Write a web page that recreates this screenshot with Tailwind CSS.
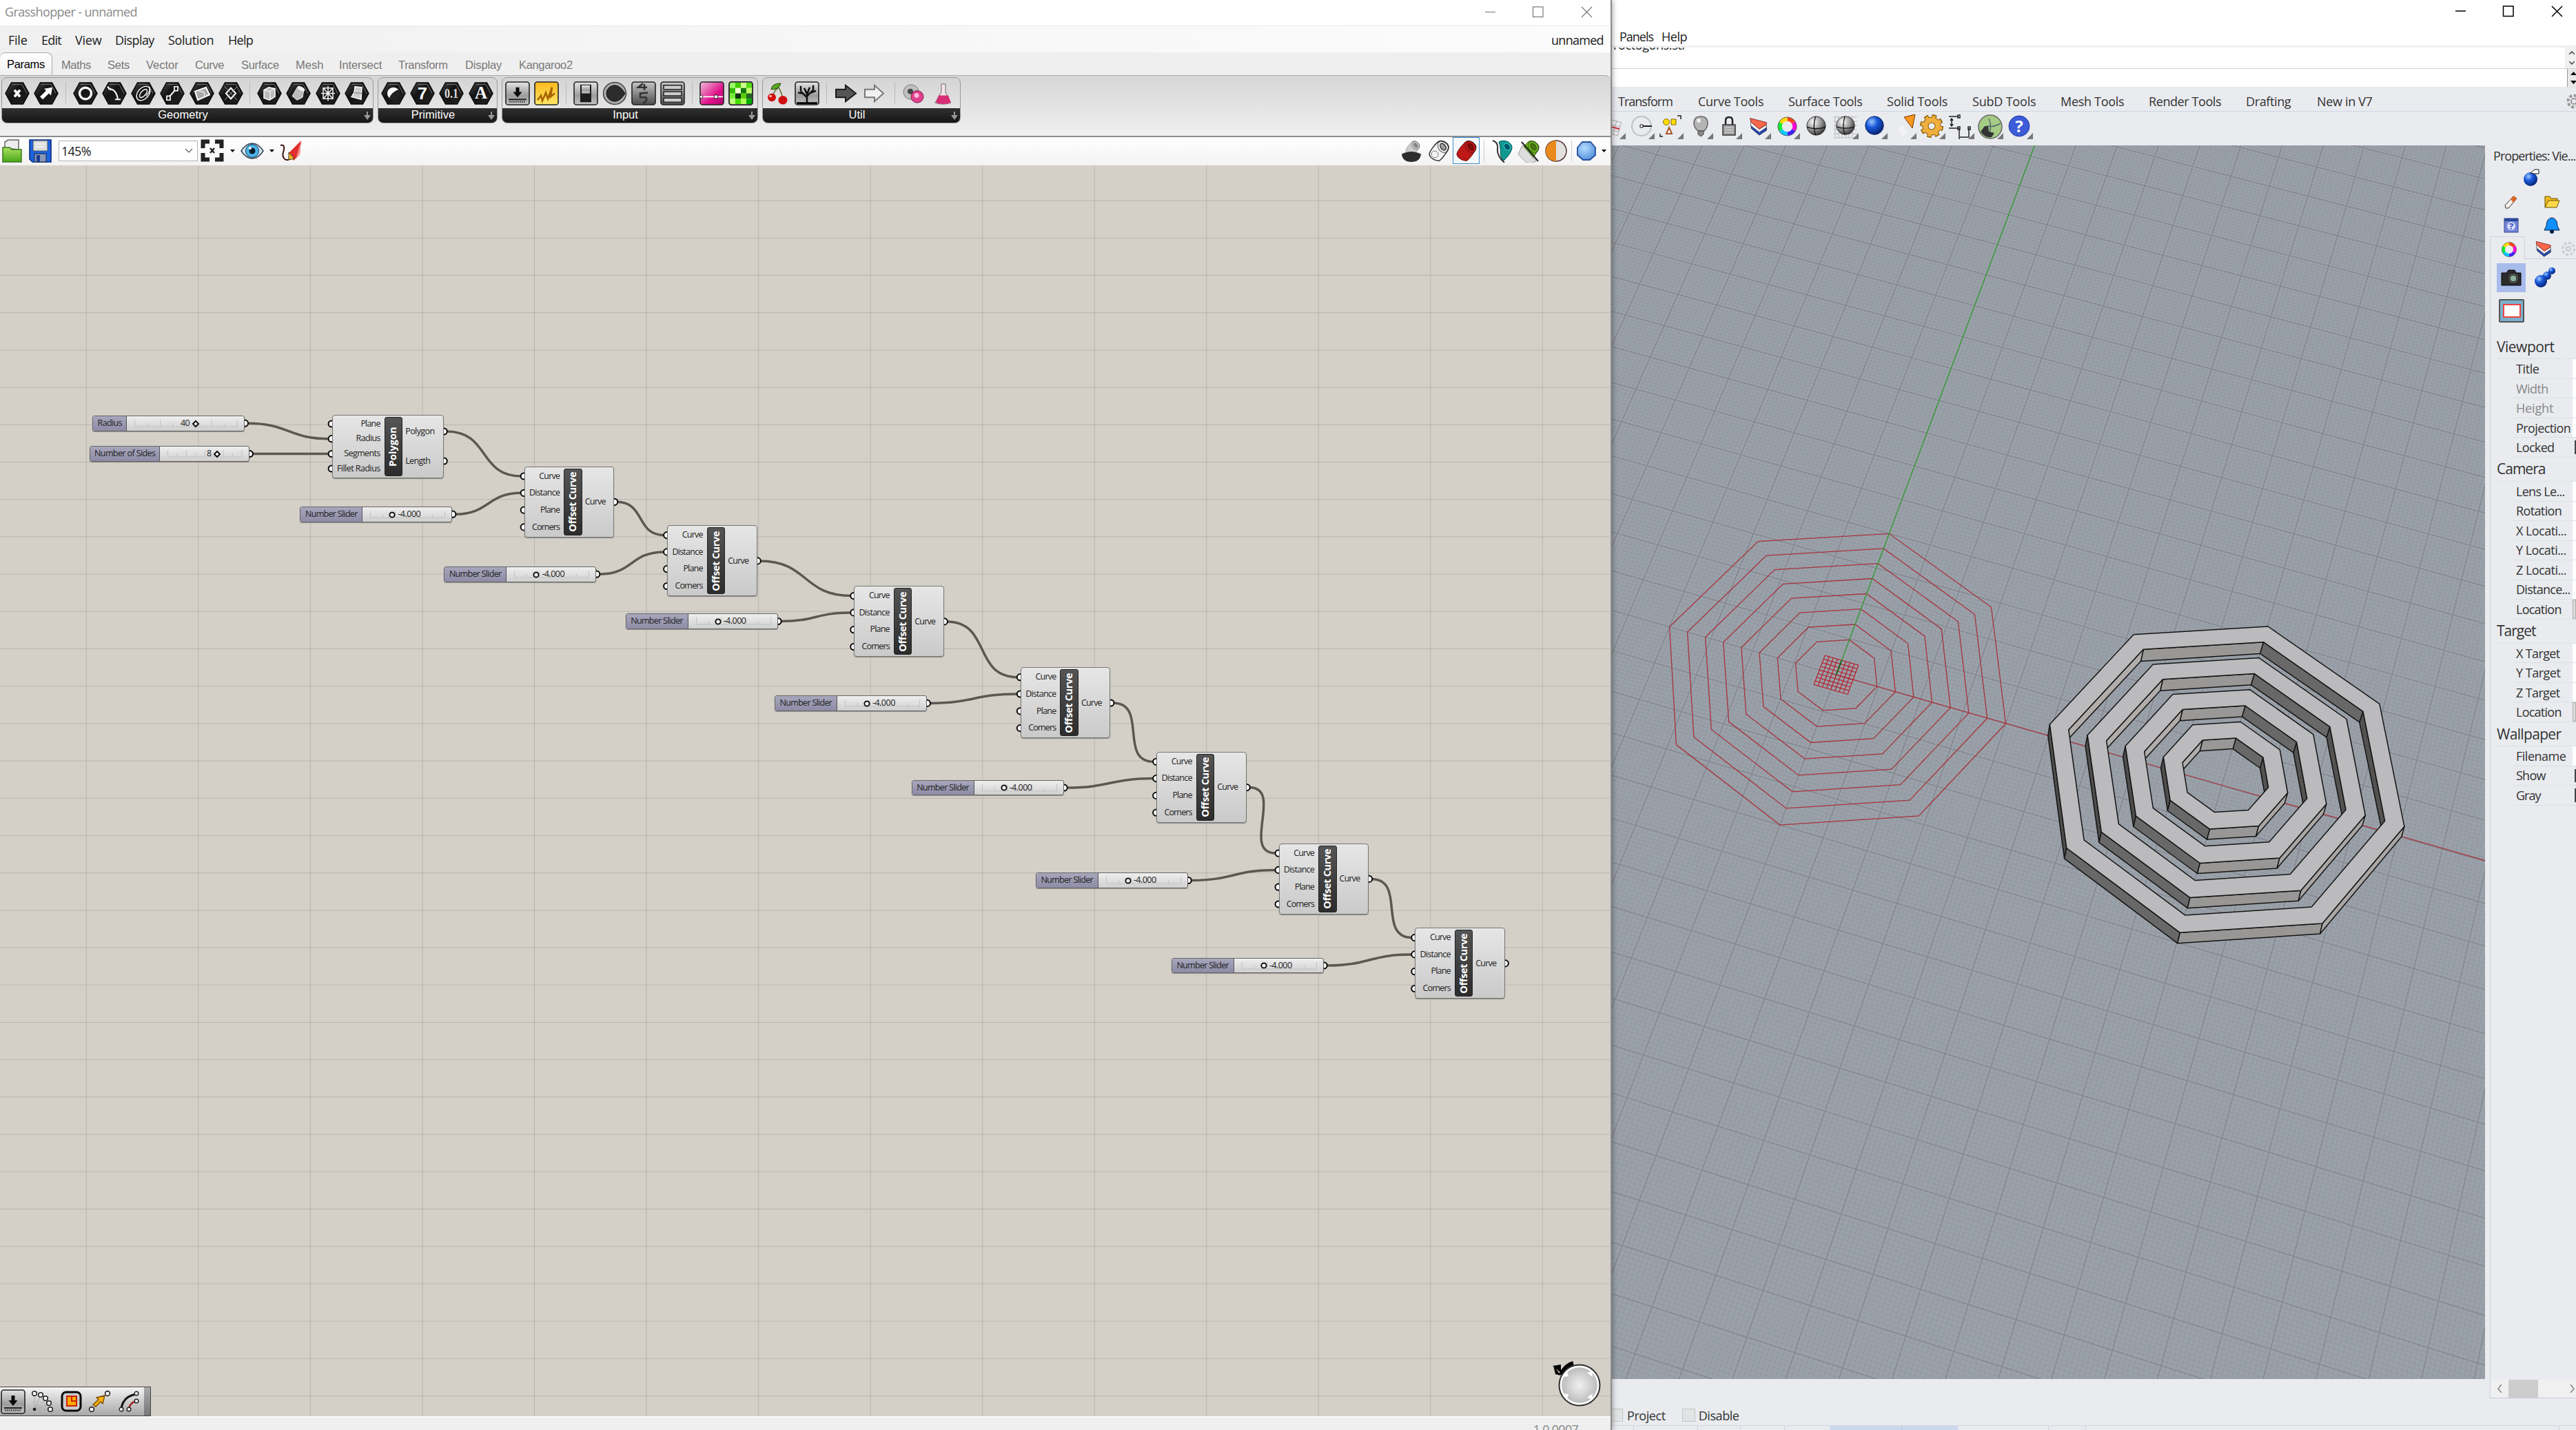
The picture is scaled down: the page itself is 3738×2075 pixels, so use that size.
<!DOCTYPE html>
<html lang="en">
<head>
<meta charset="utf-8">
<title>Grasshopper - unnamed</title>
<script src="https://cdn.jsdelivr.net/npm/@tailwindcss/browser@4"></script>
</head>
<body class="w-[3738px] h-[2075px] overflow-hidden bg-[#e9ebef] font-['Open_Sans',sans-serif] text-[18px] leading-none text-[#1a1a1a]">
<svg class="absolute w-0 h-0" width="0" height="0">
  <defs>
    <linearGradient id="gHex" x1="0" y1="0" x2="1" y2="1"><stop offset="0" stop-color="#4a4a4a"/><stop offset=".4" stop-color="#141414"/><stop offset="1" stop-color="#222"/></linearGradient>
    <linearGradient id="gBtn" x1="0" y1="0" x2="0" y2="1"><stop offset="0" stop-color="#e4e4e4"/><stop offset=".6" stop-color="#9c9c9c"/><stop offset="1" stop-color="#c4c4c4"/></linearGradient>
    <linearGradient id="gDk" x1="0" y1="0" x2="0" y2="1"><stop offset="0" stop-color="#c4c4c4"/><stop offset="1" stop-color="#4c4c4c"/></linearGradient>
    <linearGradient id="gYel" x1="0" y1="0" x2="0" y2="1"><stop offset="0" stop-color="#fbb91c"/><stop offset="1" stop-color="#ffe768"/></linearGradient>
    <linearGradient id="gPink" x1="0" y1="0" x2="1" y2="1"><stop offset="0" stop-color="#f0c0dc"/><stop offset=".6" stop-color="#e0148c"/><stop offset="1" stop-color="#b0006a"/></linearGradient>
    <linearGradient id="gGreen" x1="0" y1="0" x2="0" y2="1"><stop offset="0" stop-color="#a8e060"/><stop offset="1" stop-color="#4aa818"/></linearGradient>
    <radialGradient id="gGray" cx=".35" cy=".3" r=".8"><stop offset="0" stop-color="#fff"/><stop offset=".5" stop-color="#999"/><stop offset="1" stop-color="#222"/></radialGradient>
    <radialGradient id="gBlue" cx=".35" cy=".3" r=".8"><stop offset="0" stop-color="#9cc8ff"/><stop offset=".4" stop-color="#1858d8"/><stop offset="1" stop-color="#041a60"/></radialGradient>
    <radialGradient id="gSky" cx=".4" cy=".35" r=".8"><stop offset="0" stop-color="#b4dcff"/><stop offset="1" stop-color="#4484d8"/></radialGradient>
    <radialGradient id="gDial" cx=".5" cy=".5" r=".55"><stop offset="0" stop-color="#f0f0f0"/><stop offset="1" stop-color="#b0b0b0"/></radialGradient>
    <symbol id="hex" viewBox="0 0 36 36"><path d="M9.500 2h17L35 18l-8.500 16h-17L1 18z" fill="url(#gHex)" stroke="#0a0a0a" stroke-width="1.500"/><path d="M11 4.500h14L32 18" fill="none" stroke="#777" stroke-width="1"/></symbol>
    <symbol id="btn" viewBox="0 0 36 36"><rect x="1" y="1" width="34" height="34" rx="3.500" fill="url(#gBtn)" stroke="#222" stroke-width="1.600"/></symbol>
    <symbol id="spec" viewBox="0 0 32 32"><g fill="none" stroke-width="6"><path d="M16 5a11 11 0 0 1 9.500 5.500" stroke="#f42"/><path d="M25.500 10.500a11 11 0 0 1 0 11" stroke="#f0d"/><path d="M25.500 21.500A11 11 0 0 1 16 27" stroke="#42f"/><path d="M16 27a11 11 0 0 1-9.500-5.500" stroke="#0cf"/><path d="M6.500 21.500a11 11 0 0 1 0-11" stroke="#1e3"/><path d="M6.500 10.500A11 11 0 0 1 16 5" stroke="#fd0"/></g><circle cx="16" cy="16" r="14" fill="none" stroke="#444" stroke-width=".8"/></symbol>
    <symbol id="layer" viewBox="0 0 32 32"><path d="M3 13l14 11 12-7v6L17 31 4 20z" fill="#2448b8" stroke="#123"/><path d="M3 9l14 12 12-7v4l-12 8L3 15z" fill="#fff" stroke="#555"/><path d="M2 3l27 7v3l-12 8L3 9z" fill="#f8674a" stroke="#722"/></symbol>
    <symbol id="down" viewBox="0 0 36 36"><path d="M15.500 9h5v7h4l-6.500 8-6.500-8h4z" fill="#0a0a0a"/><path d="M5 27h26" stroke="#222" stroke-width="2"/><path d="M7 29v3m3-3v3m3-3v3m3-3v3m3-3v3m3-3v3m3-3v3m3-3v3" stroke="#333" stroke-width="1.300"/></symbol>
    <symbol id="cyl" viewBox="0 0 34 34"><path d="M17 3c4-2 13 2 14 8 1 4-9 17-13 20-5 1-14-3-15-9 0-4 9-16 14-19z"/><ellipse cx="23" cy="11" rx="7" ry="9" transform="rotate(-35 23 11)" fill="none" stroke="#111" stroke-opacity=".5"/><ellipse cx="23" cy="11" rx="3.500" ry="5.500" transform="rotate(-35 23 11)" fill="#000" fill-opacity=".35"/></symbol>
    <symbol id="sph" viewBox="0 0 36 36"><circle cx="18" cy="17" r="14" fill="url(#gGray)" stroke="#333"/><path d="M17 3c-3 9-3 19 0 28M4 19c9 3 19 3 28 0" fill="none" stroke="#111" stroke-width="1.400"/></symbol>
    <symbol id="bsph" viewBox="0 0 36 36"><circle cx="18" cy="17" r="14" fill="url(#gBlue)" stroke="#0a2060"/></symbol>
  </defs>
</svg>

<main class="flex w-[3738px] h-[2075px]">
  <!-- Grasshopper editor window -->
  <section class="flex flex-col w-[2339px] h-full shrink-0 bg-[#efefef] relative z-10 border-r-2 border-[#8c8c8c] shadow-[0_0_8px_rgba(0,0,0,0.45)]">
    <header class="flex items-center h-[37px] bg-white pl-[7px] pb-[4px] text-[#8a8a8a] shrink-0">
      <span data-w="192">Grasshopper - unnamed</span>
      <svg class="ml-auto mr-[26px] w-[156px] h-[18px]" viewBox="0 0 156 18" fill="none" stroke="#777" stroke-width="1.200"><path d="M0 9.500h15M140 2l15 15m0-15l-15 15"/><rect x="69.500" y="2" width="14.500" height="14.500"/></svg>
    </header>
    <nav id="menu" class="flex items-center h-[39px] pt-px border-t border-[#e9e9e9] bg-linear-to-r from-[#f0f0f0] to-[#fcfcfc] shrink-0"></nav>
    <nav id="tabs" class="flex items-center h-[33px] text-[16.500px] font-['Liberation_Sans',sans-serif] text-[#777] shrink-0"></nav>
    <div class="flex gap-[6px] h-[88px] pt-[2px] pl-[2px] border-t border-[#aaa] rounded-tr-lg bg-linear-to-b from-[#d6d6d6] to-[#f0f0f0] shrink-0" id="ribbon"></div>
    <div class="flex items-center h-[43px] pb-[2px] border-t-2 border-[#8c8c8c] bg-linear-to-b from-white to-[#f3f3f3] shrink-0">
      <svg class="w-[29px] h-[34px] ml-[3px]" viewBox="0 0 29 34"><path d="M4 13V4l5-3h15v14z" fill="#eee" stroke="#666" stroke-width="1.500"/><path d="M1 12h10l3 3h14v18H1z" fill="url(#gGreen)" stroke="#387818" stroke-width="1.500"/></svg>
      <svg class="w-[33px] h-[34px] ml-[10px]" viewBox="0 0 33 34"><path d="M1 1h31v32H5l-4-4z" fill="#1c64e0" stroke="#0c2c80" stroke-width="1.600"/><rect x="6" y="2" width="21" height="15" fill="#ddd" stroke="#456"/><path d="M9 7h14M9 11h14" stroke="#fff"/><rect x="8" y="21" width="17" height="12" fill="#8898b8" stroke="#124"/><rect x="11" y="23" width="5" height="10" fill="#1c3c90"/></svg>
      <div class="flex items-center ml-[10px] w-[202px] h-[30px] border border-[#b4b4b4] bg-white pl-[3px] pr-[7px]"><span data-w="43">145%</span><svg class="ml-auto w-[10px] h-[8px]" viewBox="0 0 10 8" fill="none" stroke="#555" stroke-width="1.200"><path d="M0 1l5 5 5-5"/></svg></div>
      <svg class="w-[34px] h-[33px] ml-[4px]" viewBox="0 0 34 33" fill="none" stroke="#222"><path d="M3.500 13V3.500H13M21 3.500h9.500V13M30.500 20v9.500H21M13 29.500H3.500V20" stroke-width="6"/><path d="M14 13l6 7m0-7l-6 7" stroke-width="2.400"/></svg>
      <svg class="w-[7px] h-[4px] ml-[9px]" viewBox="0 0 7 4"><path d="M0 0h7L3.500 4z"/></svg>
      <svg class="w-[34px] h-[24px] ml-[8px]" viewBox="0 0 34 24"><path d="M1 12Q8 1 17 1t16 11q-7 11-16 11T1 12z" fill="#d4e4ec" stroke="#345" stroke-width="1.500"/><circle cx="17" cy="12" r="9.500" fill="#4cb4e8" stroke="#135"/><circle cx="17" cy="12" r="4.500" fill="#0c1c30"/><circle cx="14" cy="8" r="2" fill="#fff"/></svg>
      <svg class="w-[7px] h-[4px] ml-[8px]" viewBox="0 0 7 4"><path d="M0 0h7L3.500 4z"/></svg>
      <svg class="w-[34px] h-[32px] ml-[7px]" viewBox="0 0 34 32"><path d="M2 8c6-2 6 4 4 10s2 14 9 10" fill="none" stroke="#3a1010" stroke-width="2"/><path d="M14 19L32 1l-2 20-9 9z" fill="#e03030"/><path d="M32 1l-2 20-5 4z" fill="#f89090"/><path d="M14 18l8 9-8 2z" fill="#f0c030" stroke="#431"/></svg>
      <div class="ml-auto flex items-center h-full pr-[6px]">
        <svg class="w-[32px] h-[34px]" viewBox="0 0 34 34"><use href="#cyl" fill="#ccc" stroke="#888" width="30" height="26" x="4"/><path d="M2 22q15-8 30 0-2 12-15 12T2 22z" fill="#2c2c2c"/></svg>
        <svg class="w-[34px] h-[34px] ml-[7px]" viewBox="0 0 34 34"><use href="#cyl" fill="#f4f4f4" stroke="#333" stroke-width="1.500"/><circle cx="11" cy="22" r="5" fill="none" stroke="#777"/></svg>
        <div class="flex items-center justify-center w-[39px] h-[39px] ml-[3px] border border-[#3c8cd0] bg-[#f4f8fc]"><svg class="w-[34px] h-[34px]" viewBox="0 0 34 34"><use href="#cyl" fill="#c01818" stroke="#600"/></svg></div>
        <div class="w-px h-[32px] ml-[6px] bg-[#d0d0d0]"></div>
        <svg class="w-[34px] h-[34px] ml-[9px]" viewBox="0 0 34 34"><path d="M3 2q8 2 7 12t10 20" fill="none" stroke="#333" stroke-width="2"/><path d="M12 4c8-5 20 1 19 9-2 8-6 12-12 18-8-6-2-14-7-27z" fill="#109890" stroke="#055"/><ellipse cx="24" cy="11" rx="4" ry="5.500" transform="rotate(-35 24 11)" fill="#056" stroke="#3cc"/></svg>
        <svg class="w-[34px] h-[34px] ml-[5px]" viewBox="0 0 34 34"><use href="#cyl" fill="#6cb420" stroke="#350"/><path d="M1 22L7 9l20 23q-8 4-14 2z" fill="#ddd" stroke="#999"/><path d="M6 4l24 28" stroke="#222" stroke-width="2"/></svg>
        <svg class="w-[34px] h-[34px] ml-[5px]" viewBox="0 0 34 34"><circle cx="17" cy="17" r="15" fill="#e0e0e0" stroke="#533" stroke-width="1.500"/><path d="M17 2a15 15 0 0 0 0 30z" fill="#e88a1c"/></svg>
        <div class="w-px h-[32px] ml-[5px] bg-[#d0d0d0]"></div>
        <svg class="w-[30px] h-[30px] ml-[6px]" viewBox="0 0 30 30"><path d="M9 2h12l7 8v11l-8 7H10l-8-7V10z" fill="url(#gSky)" stroke="#24509c" stroke-width="1.800"/></svg>
        <svg class="w-[7px] h-[4px] ml-[7px]" viewBox="0 0 7 4"><path d="M0 0h7L3.500 4z"/></svg>
      </div>
    </div>
    <!-- node canvas -->
    <div id="canvas" class="relative h-[1815px] shrink-0 bg-[#d4d0c8] overflow-hidden text-[12.500px] text-[#222]">
      <svg id="wires" class="absolute left-0 top-0 w-[2336px] h-[1815px]" viewBox="0 240 2336 1815"></svg>
      <div class="absolute left-0 bottom-0 flex items-center w-[219px] h-[43px] border border-l-0 border-[#444] bg-linear-to-b from-[#f4f4f4] to-[#a8a8a8] pl-px">
        <svg class="w-[36px] h-[36px]" viewBox="0 0 36 36"><use href="#btn"/><use href="#down"/></svg>
        <svg class="w-[36px] h-[36px] ml-[7px]" viewBox="0 0 36 36" fill="#fff" stroke="#222" stroke-width="1.600"><path d="M6 29V7m0 22l9-20M6 29l17-15M6 29l20-7M6 29h22" stroke="#aaa" stroke-width="1"/><circle cx="6" cy="6" r="3.300"/><circle cx="15" cy="8" r="3.300"/><circle cx="22" cy="13" r="3.300"/><circle cx="27" cy="20" r="3.300"/><circle cx="29" cy="29" r="3.300"/><circle cx="6" cy="29" r="1.500" fill="#000"/></svg>
        <svg class="w-[36px] h-[36px] ml-[6px]" viewBox="0 0 36 36"><rect x="4" y="4" width="27" height="27" rx="6" fill="#ccc" stroke="#0a0a0a" stroke-width="3"/><rect x="11" y="10" width="14" height="14" fill="#fa0" stroke="#c20" stroke-width="2"/><path d="M18 10v7h7" fill="none" stroke="#c20" stroke-width="2"/></svg>
        <svg class="w-[36px] h-[36px] ml-[6px]" viewBox="0 0 36 36"><path d="M7 22L15 15l-3-3 12-3-3 12-3-3-7 7z" fill="#fbb010" stroke="#7a4c00" stroke-width="1.400"/><circle cx="5" cy="29" r="3.400" fill="#fff" stroke="#222" stroke-width="1.600"/><circle cx="28" cy="6" r="3.400" fill="#fff" stroke="#222" stroke-width="1.600"/></svg>
        <svg class="w-[36px] h-[36px] ml-[6px]" viewBox="0 0 36 36" fill="none"><path d="M6 29Q8 10 28 7" stroke="#111" stroke-width="3"/><path d="M17 29Q18 19 28 17" stroke="#a01818" stroke-width="2.400"/><g fill="#fff" stroke="#222" stroke-width="1.400"><circle cx="6" cy="29" r="2.800"/><circle cx="28" cy="6" r="2.800"/><circle cx="17" cy="29" r="2.800"/><circle cx="28" cy="17" r="2.800"/></g></svg>
        <div class="ml-auto w-[9px] h-full bg-linear-to-b from-[#aaa] to-[#777]"></div>
      </div>
      <svg class="absolute left-[2250px] top-[1733px] w-[78px] h-[72px]" viewBox="0 0 78 72"><path d="M15 22Q21 8 33 5" fill="none" stroke="#000" stroke-width="6"/><path d="M4 8l11 15-8 -2z M3 9l12 -2 0 12z" fill="#000"/><circle cx="42" cy="37" r="29.500" fill="url(#gDial)" stroke="#333" stroke-width="2"/><circle cx="42" cy="37" r="27" fill="none" stroke="#fff" stroke-width="2.500"/><path d="M24 17l2 7-8 1zM60 17l-7 2 8 6zM24 57l2-7-8-1zM60 57l-7-2 8-6z" fill="#fff"/></svg>
    </div>
    <footer class="flex justify-end items-start h-[20px] pt-[8px] pr-[47px] border-t-2 border-[#fafafa] overflow-hidden text-[#888] shrink-0"><span data-w="65">1.0.0007</span></footer>
  </section>

  <!-- Rhino window -->
  <section class="flex flex-col flex-1 min-w-0 bg-[#e9ebef] text-[#333] ml-[-1px]">
    <header class="flex items-start justify-end h-[37px] bg-white pt-[7px] pr-[19px]">
      <svg class="w-[156px] h-[18px]" viewBox="0 0 156 18" fill="none" stroke="#000" stroke-width="1.500"><path d="M0 9h15M140 2l15 15m0-15l-15 15"/><rect x="69.500" y="2" width="14.500" height="14.500"/></svg>
    </header>
    <nav id="rmenu" class="flex items-center h-[29px] bg-white text-[#222]"></nav>
    <div class="flex h-[34px] border-t-3 border-[#f0f0f0] border-b border-b-[#cdd2dc] bg-white">
      <div class="flex items-start flex-1 h-full overflow-hidden pl-[3px]"><span class="mt-[-13px] text-[#222]" data-w="104">roctogons.stl</span></div>
      <div class="flex flex-col items-center justify-around w-[16px] pl-1 bg-[#f0f0f0]"><svg class="w-[8px] h-[5px]" viewBox="0 0 8 5" fill="none" stroke="#444" stroke-width="1.500"><path d="M0 5l4-4 4 4"/></svg><svg class="w-[8px] h-[5px]" viewBox="0 0 8 5" fill="none" stroke="#444" stroke-width="1.500"><path d="M0 0l4 4 4-4"/></svg></div>
    </div>
    <div class="flex justify-end h-[27px] bg-white border-b border-[#e4e6ea]">
      <div class="flex flex-col items-center justify-around w-[13px] pl-1 border-l border-[#999] bg-[#e8e8e8]"><svg class="w-[9px] h-[5px]" viewBox="0 0 9 5"><path d="M0 5l4.500-5L9 5z"/></svg><svg class="w-[9px] h-[5px]" viewBox="0 0 9 5"><path d="M0 0l4.500 5L9 0z"/></svg></div>
    </div>
    <nav class="flex items-center h-[35px] pt-[5px] border-b border-[#cdd6e2]">
      <div id="rtabs" class="flex"></div>
      <svg class="ml-auto w-[14px] h-[22px]" viewBox="0 0 14 22" fill="none" stroke="#999" stroke-width="2"><circle cx="11" cy="11" r="4"/><circle cx="11" cy="11" r="8.500" stroke-dasharray="4 2.600" stroke-width="4"/></svg>
    </nav>
    <div id="rtools" class="flex items-start h-[49px] pt-[4px] overflow-hidden"></div>
    <div class="flex h-[1790px]">
      <svg id="view" class="w-[1268px] h-[1790px] shrink-0 bg-[#9aa1a9]" viewBox="2338 211 1268 1790"></svg>
      <aside class="flex flex-col flex-1 min-w-0 h-[1818px] pl-[7px] overflow-hidden">
        <div class="h-[30px] pt-[6px] pl-[5px] whitespace-nowrap"><span data-w="119">Properties: Vie...</span></div>
        <div class="h-[34px] pl-[48px]"><svg class="w-[24px] h-[30px] mt-[2px]" viewBox="0 0 24 30"><circle cx="11" cy="17" r="10" fill="url(#gBlue)"/><path d="M11 8l6-5h6v6h-7z" fill="#fff" stroke="#111"/></svg></div>
        <div class="flex items-center h-[35px] pl-[20px]"><svg class="w-[22px] h-[24px]" viewBox="0 0 22 24"><path d="M2 17L14 4l5 3L7 21l-4 0z" fill="#f4f0ea" stroke="#333"/><path d="M10 8l5-5 4 4-5 6z" fill="#e06828"/></svg><svg class="w-[24px] h-[24px] ml-[36px]" viewBox="0 0 24 24"><path d="M2 20V4h7l2 3h9v3" fill="#f0b820" stroke="#650"/><path d="M2 20l5-10h16l-4 10z" fill="#ffd84c" stroke="#650"/></svg></div>
        <div class="flex items-center h-[33px] pl-[20px]"><svg class="w-[22px] h-[22px]" viewBox="0 0 22 22"><rect x="1" y="1" width="20" height="20" fill="#7484d8" stroke="#348"/><rect x="1" y="1" width="20" height="4" fill="#28489c"/><circle cx="11" cy="12" r="6" fill="#d4dcf8"/><text x="11" y="17" text-anchor="middle" font-size="13" font-weight="700" fill="#3850c0">?</text></svg><svg class="w-[24px] h-[26px] ml-[36px]" viewBox="0 0 24 26"><path d="M12 2q8 1 8 12l3 6H1l3-6Q4 3 12 2z" fill="#1090fc" stroke="#024"/><circle cx="12" cy="22" r="3" fill="#024"/></svg></div>
        <div class="flex items-stretch h-[33px]"><div class="flex items-center justify-center w-[58px] border border-b-0 border-[#ccd2dc] pl-1 pt-[3px]"><svg class="w-[24px] h-[24px]"><use href="#spec"/></svg></div><div class="flex flex-1 items-center border-b border-[#ccd2dc] pl-[14px] pt-[3px]"><svg class="w-[26px] h-[25px] shrink-0"><use href="#layer"/></svg><svg class="w-[22px] h-[22px] ml-[12px] shrink-0" viewBox="0 0 22 22" fill="none" stroke="#c4ccd8" stroke-width="2"><circle cx="11" cy="11" r="8.500" stroke-dasharray="4 2.600" stroke-width="3"/><circle cx="11" cy="11" r="3"/></svg></div></div>
        <div class="flex flex-col flex-1 border-l border-[#ccd2dc] pl-[9px]">
          <div class="flex mt-[6px] h-[42px]"><div class="flex items-center justify-center w-[42px] bg-[#a8bcec]"><svg class="w-[32px] h-[28px]" viewBox="0 0 32 28"><path d="M2 7h7l3-4h9l2 4h7v18H2z" fill="#2c2c2c" stroke="#000"/><circle cx="19" cy="15" r="8" fill="#555" stroke="#111"/><circle cx="19" cy="15" r="5" fill="#8ab09a" stroke="#111"/></svg></div><svg class="ml-[12px] w-[32px] h-[36px] mt-[3px]" viewBox="0 0 32 36"><circle cx="26" cy="8" r="5" fill="url(#gBlue)"/><circle cx="19" cy="15" r="6" fill="url(#gBlue)"/><circle cx="10" cy="23" r="9" fill="url(#gBlue)"/></svg></div>
          <svg class="mt-[10px] ml-[3px] w-[37px] h-[34px]" viewBox="0 0 37 34"><rect x="1" y="1" width="35" height="32" rx="1" fill="#7ab0cc" stroke="#555" stroke-width="2"/><rect x="7" y="8" width="24" height="18" fill="#fff" stroke="#e44" stroke-width="2"/></svg>
          <div id="props" class="mt-[18px]"></div>
          <div class="flex items-center mt-auto ml-[-9px] h-[27px] border-b border-[#c8c8d4] bg-[#f0f0f0] pl-[10px] pr-[2px]"><svg class="w-[7px] h-[12px]" viewBox="0 0 7 12" fill="none" stroke="#888" stroke-width="1.600"><path d="M6 0L1 6l5 6"/></svg><div class="w-[43px] h-full bg-[#cdcdcd] ml-[9px]"></div><svg class="w-[7px] h-[12px] ml-auto" viewBox="0 0 7 12" fill="none" stroke="#888" stroke-width="1.600"><path d="M1 0l5 6-5 6"/></svg></div>
        </div>
      </aside>
    </div>
    <div class="flex items-end h-[68px] pb-[5px] border-b border-[#cfd6e0]">
      <div class="w-[17px] h-[19px] border border-[#c4c6c8] bg-[#e2e3e3]"></div><span class="ml-[6px]" data-w="56">Project</span>
      <div class="w-[19px] h-[19px] ml-[24px] border border-[#c4c6c8] bg-[#e2e3e3]"></div><span class="ml-[5px]" data-w="59">Disable</span>
    </div>
    <div class="flex h-[6px]"><div class="w-[33px] border-r border-[#ccd6e2]"></div><div class="w-[93px] border-r border-[#ccd6e2]"></div><div class="w-[62px] border-r border-[#ccd6e2]"></div><div class="w-[64px] border-r border-[#ccd6e2]"></div><div class="w-[65px]"></div><div class="w-[105px] bg-[#cdd8ed] border-r border-[#b8c8e4]"></div><div class="w-[81px] bg-[#cdd8ed]"></div><div class="w-[132px] border-r border-[#ccd6e2]"></div><div class="w-[54px] border-r border-[#ccd6e2]"></div><div class="w-[687px] border-r border-[#ccd6e2]"></div></div>
  </section>
</main>

<script>
const $ = id => document.getElementById(id);
// rows of labels: [text, left, width], left measured from the row's own start
function row(id, items, cls = '') {
  let x = 0;
  $(id).innerHTML = items.map(([t, l, w]) => { const m = l - x; x = l + w; return `<span class="whitespace-nowrap shrink-0 ${cls}" style="margin-left:${m}px;width:${w}px"><span data-w="${w}">${t}</span></span>`; }).join('');
}
row('menu', [['File',12,28],['Edit',60,29],['View',109,38],['Display',167,57],['Solution',244,66],['Help',331,36],['unnamed',2251,76]]);
row('tabs', [['Maths',89,43],['Sets',156,32],['Vector',212,47],['Curve',283,42],['Surface',350,55],['Mesh',429,40],['Intersect',492,62],['Transform',578,72],['Display',675,53],['Kangaroo2',753,78]], 'pt-[4px]');
$('tabs').firstElementChild.style.marginLeft = '13px';
$('tabs').insertAdjacentHTML('afterbegin', '<span class="flex items-center justify-center w-[76px] h-[34px] mt-px shrink-0 rounded-t-lg border border-b-0 border-l-0 border-[#aaa] bg-linear-to-b from-white to-[#f0f0f0] text-black"><span data-w="55">Params</span></span>');
row('rmenu', [['Panels',12,49],['Help',73,37]], 'mt-[2px]');
row('rtabs', [['Transform',10,79],['Curve Tools',126,95],['Surface Tools',257,107],['Solid Tools',400,88],['SubD Tools',524,92],['Mesh Tools',652,92],['Render Tools',780,105],['Drafting',921,65],['New in V7',1024,81]]);

// ribbon groups
const W = 'fill="none" stroke="#f4f4f4" stroke-width="2.200"', W4 = 'fill="none" stroke="#f4f4f4" stroke-width="4"', W1 = 'fill="none" stroke="#f4f4f4" stroke-width="1.500"';
const H = s => `<use href="#hex"/>${s}`, B = s => `<use href="#btn"/>${s}`;
const greens = ['#9f6','#4c0','#cf8','#5d1','#3b0','#efc','#171','#bf6','#7e3','#131','#5c0','#262','#bf7','#4d0','#af5','#0a0'];
const groups = [
 ['Geometry', 540, [H(`<path d="M14 13l8 10m0-10l-8 10" ${W4}/>`), H('<path d="M12 26l-3-3 9-9-3-3 12-2-2 12-3-3-9 9z" fill="#fff"/>'), 0,
  H(`<circle cx="18" cy="18" r="8.500" fill="none" stroke="#f4f4f4" stroke-width="3.500"/>`), H(`<path d="M9 11q12 0 14 16M8 8l5 5M19 27h8" ${W}/>`), H(`<g ${W1}><ellipse cx="18" cy="18" rx="8" ry="12" transform="rotate(40 18 18)"/><ellipse cx="18" cy="18" rx="3.500" ry="7.500" transform="rotate(40 18 18)"/><path d="M26 8q4 5-4 14"/></g>`),
  H(`<path d="M12 25L24 11" ${W}/><path d="M10 22h5v6h-5zM21 8h5v6h-5z" fill="#111" stroke="#fff" stroke-width="1.700"/>`), H('<path d="M8 15l16-6 5 11-17 8z" fill="#aaa" stroke="#fff" stroke-width="2"/><path d="M14 15l7 1 1 6" fill="none" stroke="#fff"/>'), H(`<path d="M18 10l7 8-7 8-7-8z" ${W}/><path d="M9 8l18 20M27 8L9 28" stroke="#999" fill="none"/>`), 0,
  H('<path d="M10 13l7-4 9 2v12l-8 5-8-3z" fill="#bbb" stroke="#fff" stroke-width="1.500"/><path d="M10 13l9 2 7-4M19 15v12" fill="none" stroke="#fff"/>'), H('<path d="M17 8l9 4-2 12-8 4-7-6z" fill="#bbb" stroke="#eee"/><ellipse cx="22" cy="11" rx="6" ry="3" fill="#eee" transform="rotate(30 22 11)"/>'), H(`<g ${W1}><path d="M11 10h14v16H11zM18 7v22M8 18h20M11 10l14 16M25 10L11 26"/></g>`), H('<path d="M15 8l10 1-1 18-14-4q5-6 5-15z" fill="#ccc" stroke="#fff" stroke-width="1.500"/><path d="M13 17l12 1" stroke="#777"/>')]],
 ['Primitive', 174, [H('<circle cx="18" cy="18" r="9" fill="#fff"/><path d="M25 12a9 9 0 0 1-13 13q2-8 13-13z" fill="#222"/>'), H('<text x="18" y="27" text-anchor="middle" font-size="25" font-weight="700" fill="#fff" font-family="Liberation Sans">7</text>'), H('<text x="18" y="25" text-anchor="middle" font-size="20" font-weight="700" fill="#ddd" font-family="Liberation Serif" textLength="20" lengthAdjust="spacingAndGlyphs">0.1</text>'), H('<text x="18" y="26" text-anchor="middle" font-size="25" font-weight="700" fill="#fff" font-family="Liberation Serif">A</text>')]],
 ['Input', 372, [B('<use href="#down"/>'), '<rect x="1" y="1" width="34" height="34" rx="3.500" fill="url(#gYel)" stroke="#222" stroke-width="1.600"/><path d="M5 28l5-7 2 8 5-12 3 9 6-17-2 14 6-5" fill="none" stroke="#a86400" stroke-width="2.600"/>', 0,
  B('<path d="M10 5h16v26H10z" fill="#1c1c1c"/><path d="M12 6h12v12H12z" fill="url(#gBtn)"/>'), '<circle cx="18" cy="18" r="16.500" fill="#aaa" stroke="#444" stroke-width="1.500"/><path d="M18 6a12 12 0 1 0 0 24q8 0 15-12Q26 6 18 6z" fill="#2c2c2c" stroke="#111"/>', '<rect x="1" y="1" width="34" height="34" rx="3.500" fill="url(#gDk)" stroke="#222" stroke-width="1.600"/><path d="M17 3l-7 6h13m-4-5v9M24 17l-11 1 0 6 8 0q4 4-4 9" fill="none" stroke="#333" stroke-width="2.600"/>',
  '<rect x="1" y="1" width="34" height="34" rx="3.500" fill="url(#gDk)" stroke="#222" stroke-width="1.600"/><g fill="#ccc" stroke="#222" stroke-width="1.500"><path d="M5 6h26v6H5zM5 15.500h26v6H5zM5 25h26v6H5z"/></g>', 0,
  '<rect x="1" y="1" width="34" height="34" rx="3.500" fill="url(#gPink)" stroke="#222" stroke-width="1.600"/><path d="M2 23h32" stroke="#fff" stroke-width="1.600"/><circle cx="2.500" cy="23" r="2.400" fill="#fff" stroke="#222"/><circle cx="24" cy="23" r="2.800" fill="#fff" stroke="#222"/>', greens.map((c, i) => `<rect x="${2 + i % 4 * 8}" y="${2 + (i >> 2) * 8}" width="8" height="8" fill="${c}"/>`).join('') + '<rect x="1" y="1" width="34" height="34" rx="3.500" fill="none" stroke="#222" stroke-width="1.800"/>']],
 ['Util', 288, ['<path d="M19 9q-8 6-9 15M19 9q4 8 6 16" fill="none" stroke="#562" stroke-width="1.500"/><path d="M8 12q1-9 14-9-3 10-14 9z" fill="#58a820" stroke="#240"/><circle cx="9" cy="24" r="6" fill="#d01010"/><circle cx="25" cy="28" r="6.500" fill="#d01010"/><circle cx="7" cy="22" r="2" fill="#faa"/>', B('<path d="M3 31h30v3H3z"/><path d="M18 32V18M18 24l-9-9M18 22l9-9M18 19l-4-9m4 9l4-10M12 18l-7-1M24 17l7-3M9 15V7m18 6V6" stroke="#111" stroke-width="2.600" fill="none"/>'), 0,
  '<path d="M3 12h14V6l15 12-15 12v-6H3z" fill="#555" stroke="#1a1a1a" stroke-width="2"/>', '<path d="M3 12h14V6l13 12-13 12v-6H3z" fill="#f0f0f0" stroke="#777" stroke-width="2"/>', 0,
  '<circle cx="14" cy="16" r="11" fill="#c0c0c0" stroke="#777"/><circle cx="13" cy="15" r="4" fill="#444"/><circle cx="23" cy="23" r="9" fill="#e0408c" stroke="#801848"/><circle cx="22" cy="21" r="3.500" fill="#fbd"/>', '<path d="M15 4h6v12l7 16q-11 4-22 0l9-16z" fill="#f4e4ec" stroke="#888" stroke-width="1.300"/><path d="M11 21h14l4 11q-11 4-22 0z" fill="#d82c74"/>']]];
$('ribbon').innerHTML = groups.map(([n, w, ic]) => `<div class="flex flex-col h-[67px] border border-[#999] rounded-lg overflow-hidden bg-linear-to-b from-[#d4d4d4] to-[#ececec]" style="width:${w}px"><div class="flex items-center h-[44px] pl-[1px]">${ic.map(i => i ? `<div class="flex justify-center w-[42.200px] shrink-0"><svg class="w-[36px] h-[35px]" viewBox="0 0 36 36" preserveAspectRatio="none">${i}</svg></div>` : '<div class="flex justify-center w-[14.300px] shrink-0"><div class="w-px h-[32px] bg-[#bbb]"></div></div>').join('')}</div><div class="flex items-center flex-1 pr-[3px] bg-linear-to-b from-[#303030] to-[#161616] text-white text-[16.500px] font-['Liberation_Sans',sans-serif]"><span class="flex-1 text-center pb-[2px] pr-[10px]">${n}</span><svg class="w-[10px] h-[12px] ml-[-10px]" viewBox="0 0 10 12"><path d="M4 0h2v5h4L5 12 0 5h4z" fill="#999"/></svg></div></div>`).join('');

// Rhino toolbar
const tri = '<path d="M42 27v9h-9z" fill="#777"/>';
const tools = [
 '<g transform="translate(22 8) rotate(15)" stroke="#aaa" fill="none"><path d="M0 0h14v20H0zM0 7h14M0 14h14M7 0v20"/><path d="M0 10h14" stroke="#c33" stroke-width="2"/></g>',
 '<circle cx="23" cy="17" r="14" fill="none" stroke="#c0c0c0" stroke-width="2"/><path d="M23 17h15" stroke="#222" stroke-width="2"/><path d="M21 15h4v4h-4z" fill="#fff" stroke="#111"/>',
 '<circle cx="17" cy="11" r="4.500" fill="#fd0" stroke="#860"/><path d="M24 7h7v8h-7z" fill="#fd0" stroke="#860"/><path d="M21 19l4 9h-8z" fill="#fff" stroke="#a52" stroke-width="2"/><path d="M33 2h5v5M8 28v4h4" fill="none" stroke="#222" stroke-width="1.500"/>',
 '<path d="M24 3q10 0 10 10 0 6-5 11h-9q-6-5-6-11Q14 3 24 3z" fill="#b4b4b4" stroke="#666" stroke-width="1.500"/><path d="M20 24h8v5l-4 3-4-3z" fill="#888" stroke="#444"/><circle cx="21" cy="9" r="3" fill="#eee"/>',
 '<path d="M18 15V9q0-5 5-5t5 5v6" fill="none" stroke="#222" stroke-width="2.500"/><path d="M14 15h18v15H14z" fill="#a4a4a4" stroke="#333" stroke-width="1.500"/><path d="M17 19h12m-12 3.500h12M17 26h12" stroke="#ddd"/>',
 '<use href="#layer" x="10" y="3" width="28" height="28"/>', '<use href="#spec" x="8" y="2" width="31" height="31"/>', '<use href="#sph" x="6" width="35" height="35"/>',
 '<path d="M8 2v32m5-32v32m5-32v32m5-32v32m5-32v32m5-32v32M6 4h34M6 10h34M6 16h34M6 22h34M6 28h34M6 34h34" stroke="#bbb"/><use href="#sph" x="6" width="34" height="34"/>', '<use href="#bsph" x="6" width="34" height="34"/>',
 '<path d="M24 4L40 0l-4 20z" fill="#f89820" stroke="#730"/><path d="M14 22l8-6 8 10-8 6z" fill="#f4f4f4" opacity=".8"/>',
 '<circle cx="22" cy="17" r="9" fill="none" stroke="#8a5800" stroke-width="9"/><circle cx="22" cy="17" r="13.500" fill="none" stroke="#8a5800" stroke-width="7" stroke-dasharray="6 4.600"/><circle cx="22" cy="17" r="9" fill="none" stroke="#f0b040" stroke-width="7"/><circle cx="22" cy="17" r="13" fill="none" stroke="#f0b040" stroke-width="5" stroke-dasharray="4.200 6.010" stroke-dashoffset="-.8"/>',
 '<g fill="none" stroke="#222" stroke-width="1.500"><path d="M5 3h14M5 20h14M9 6v11m-2-8l2-3 2 3m-4 5l2 3 2-3M20 20v16M34 20v14M21 33h12"/><path d="M18 1h3v4h-3zM18 18h3v4h-3zM33 18h3v4h-3z"/></g>',
 '<circle cx="23" cy="18" r="17" fill="#a4cc84" stroke="#666" stroke-width="1.500"/><path d="M21 6q6 14-2 26M38 13q-10 6-20 4" fill="none" stroke="#567" stroke-width="1.500"/><path d="M9 25l6-8 5 0 1 8 8 2-4 6q-9 2-16-8z" fill="#333"/>',
 '<circle cx="22" cy="17" r="15" fill="#3c5cd8" stroke="#2038a0"/><text x="22" y="25.500" text-anchor="middle" font-size="24" font-weight="700" fill="#fff">?</text>'];
$('rtools').innerHTML = '<div class="w-[2px] ml-[-23px] shrink-0"></div>' + tools.map((t, i) => `<svg class="w-[42.200px] h-[37px] shrink-0" viewBox="0 0 42.200 37">${t}${[7].includes(i) ? '' : tri}</svg>`).join('');

// property rows
const P = [['Viewport',83,['Title',34],['Width',47],['Height',54],['Projection',79],['Locked',55]],['Camera',70,['Lens Le...',70],['Rotation',66],['X Locati...',73],['Y Locati...',73],['Z Locati...',73],['Distance...',79],['Location',66]],['Target',57,['X Target',64],['Y Target',64],['Z Target',64],['Location',66]],['Wallpaper',93,['Filename',72],['Show',43],['Gray',35]]];
$('props').innerHTML = P.map(([h, w, ...r]) => `<div class="flex items-center h-[35.300px] border-b border-[#dde0e6] text-[21px]"><span data-w="${w}">${h}</span></div>` + r.map(([t, tw]) => `<div class="flex h-[28.500px] ml-[24px] border-b border-[#dde0e6]"><div class="flex items-center shrink-0 w-[86px] pl-[4px] whitespace-nowrap ${/Width|Height/.test(t) ? 'text-[#888]' : ''}"><span data-w="${tw}">${t}</span></div>${/Locked|Show|Gray/.test(t) ? '<div class="my-[4px] ml-[3px] w-[4px] bg-[#444]"></div>' : t === 'Location' ? '<div class="flex-1 bg-[#ddd] border border-[#aaa]"></div>' : '<div class="flex-1 bg-white"></div>'}</div>`).join('')).join('');

// node canvas: sliders and components
const top0 = 240, fitS = (t, w) => `<span class="whitespace-nowrap" data-w="${w}">${t}</span>`;
let ports = '', wires = '', lines = '', html = '';
for (let x = 125.3; x < 2336; x += 162.55) lines += `M${x.toFixed(1)} 240v1815`;
for (let y = 291.1; y < 2055; y += 54.2) lines += `M0 ${y.toFixed(1)}h2336`;
const port = (x, y) => ports += `<circle cx="${x}" cy="${y}" r="4.600" fill="#fff" stroke="#0a0a0a" stroke-width="2"/>`;
const wire = (a, b) => { const c = Math.hypot(b[0] - a[0], b[1] - a[1]) / 2; wires += `<path d="M${a}C${a[0] + c} ${a[1]} ${b[0] - c} ${b[1]} ${b}"/>`; };
function slider(x, y, name, nw, lw, val, vx, vw, kx, w = 221, dia = false) {
  const t0 = lw + 11, tw = w - lw - 22, n = dia ? 9 : 7; let tk = `M0 10h${tw}`;
  for (let i = 0; i < n; i++) tk += `M${(i * (tw - 1) / (n - 1) + .5).toFixed(1)} ${i % 2 ? 5 : 0}V10`;
  html += `<div class="absolute flex h-[22.500px] rounded-[3px] border border-[#666] shadow-[0_1px_1px_rgba(0,0,0,0.3)] bg-linear-to-b from-[#efefef] to-[#cfcfcf] overflow-hidden" style="left:${x}px;top:${y - top0}px;width:${w}px"><div class="flex items-center justify-center shrink-0 border-r border-[#555] bg-linear-to-b from-[#a8a6bc] to-[#8e8ca6]" style="width:${lw}px">${fitS(name, nw)}</div><svg class="absolute top-[5px] h-[11px]" style="left:${t0}px;width:${tw}px" fill="none" stroke="#c2c2c2"><path d="${tk}"/></svg><span class="absolute top-[4px]" style="left:${vx}px">${fitS(val, vw)}</span><svg class="absolute top-[4.500px] w-[12px] h-[12px]" style="left:${kx - 7}px" viewBox="0 0 12 12" fill="#fff" stroke="#111" stroke-width="2">${dia ? '<path d="M6 2l4 4-4 4-4-4z"/>' : '<circle cx="6" cy="6" r="3.600"/>'}</svg></div>`;
  port(x + w + .5, y + 11.2); return [x + w + 4, y + 11.2];
}
function node(x, y, w, h, bx, bar, bw, ins, outs) {
  const lab = ([t, ty, tw], side) => `<div class="absolute flex items-center h-[16px] ${side ? 'left-[4px]' : 'right-[6px]'}" style="top:${ty - 9}px">${fitS(t, tw)}</div>`;
  html += `<div class="absolute flex rounded-[4px] border border-[#777] shadow-[0_1px_1px_rgba(0,0,0,0.35)] bg-linear-to-b from-[#e6e6e6] to-[#cacaca]" style="left:${x}px;top:${y - top0}px;width:${w}px;height:${h}px"><div class="relative shrink-0" style="width:${bx - 1}px">${ins.map(i => lab(i, 0)).join('')}</div><div class="flex items-center justify-center shrink-0 w-[26.500px] my-[2px] rounded-[3px] border border-[#222] bg-linear-to-b from-[#555] to-[#2c2c2c] text-white font-bold text-[14.500px]"><span class="-rotate-90 shrink-0">${fitS(bar, bw)}</span></div><div class="relative flex-1">${outs.map(o => lab(o, 1)).join('')}</div></div>`;
  ins.forEach(i => port(x - .5, y + i[1])); outs.forEach(o => port(x + w + .5, y + o[1]));
}
const s1 = slider(133.9, 603, 'Radius', 35, 49.5, '40', 127, 13, 150, 221, true);
const s2 = slider(129.9, 647.3, 'Number of Sides', 88, 101.5, '8', 169, 7, 185, 232, true);
node(481.7, 602, 162, 92, 76, 'Polygon', 57, [['Plane',13,28],['Radius',34.7,35],['Segments',56.5,52],['Fillet Radius',78,63]], [['Polygon',24,42],['Length',67,36]]);
wire(s1, [478, 636.7]); wire(s2, [478, 658.5]);
let out = [648, 626];
[[760.7,676.7,435.3,735],[968.2,762.3,644.2,822],[1239.3,850.3,907.6,890.3],[1480.9,968.4,1123.9,1009.2],[1678.2,1091,1322.6,1131.8],[1855.6,1223.8,1502.7,1266.3],[2053.3,1346.3,1699.7,1389.8]].forEach(([x, y, sx, sy]) => {
  const s = slider(sx, sy, 'Number Slider', 76, 90, '-4.000', 141, 33, 134);
  node(x, y, 130.5, 103, 57.5, 'Offset Curve', 87, [['Curve',14.3,30],['Distance',38.6,44],['Plane',63.4,28],['Corners',88.2,40]], [['Curve',51.6,30]]);
  wire(out, [x - 4, y + 14.3]); wire(s, [x - 4, y + 38.6]); out = [x + 134, y + 51.6];
});
$('wires').innerHTML = `<path d="${lines}" stroke="#000" stroke-opacity=".12" fill="none"/><g fill="none" stroke="#5c5751" stroke-width="3.500">${wires}</g>${ports}`;
$('wires').insertAdjacentHTML('afterend', html);

// perspective viewport
function homog(src, dst) {
  const A = [];
  src.forEach(([x, y], i) => { const [u, v] = dst[i]; A.push([x, y, 1, 0, 0, 0, -u * x, -u * y, u], [0, 0, 0, x, y, 1, -v * x, -v * y, v]); });
  for (let c = 0; c < 8; c++) {
    let p = c; for (let r = c; r < 8; r++) if (Math.abs(A[r][c]) > Math.abs(A[p][c])) p = r;
    [A[c], A[p]] = [A[p], A[c]];
    for (let r = 0; r < 8; r++) if (r !== c) { const f = A[r][c] / A[c][c]; for (let k = c; k < 9; k++) A[r][k] -= f * A[c][k]; }
  }
  const h = A.map((r, i) => r[8] / r[i]);
  return (x, y) => { const w = h[6] * x + h[7] * y + 1; return [(h[0] * x + h[1] * y + h[2]) / w, (h[3] * x + h[4] * y + h[5]) / w]; };
}
const F = p => p[0].toFixed(1) + ' ' + p[1].toFixed(1);
const axisPts = [[40, 0], [0, 40], [-40, 0], [0, -40]];
const scr = [[1278, 980], [899, 208], [185, 587], [544, 1392]].map(([x, y]) => [2340 + x / 2.24, 700 + y / 2.8]);
const G = homog(axisPts, scr), inv = homog(scr, axisPts);
const cs = [[2338, 211], [3606, 211], [3606, 2001], [2338, 2001]].map(c => inv(...c));
const lo = k => Math.floor(Math.min(...cs.map(c => c[k]))), hi = k => Math.ceil(Math.max(...cs.map(c => c[k])));
const [x0, x1, y0, y1] = [lo(0), hi(0), lo(1), hi(1)];
let minor = '', major = '';
for (let x = x0; x <= x1; x++) { const s = `M${F(G(x, y0))}L${F(G(x, y1))}`; x % 10 ? minor += s : major += s; }
for (let y = y0; y <= y1; y++) { const s = `M${F(G(x0, y))}L${F(G(x1, y))}`; y % 10 ? minor += s : major += s; }
const oct = (T, r) => [...Array(8)].map((_, i) => T(r * Math.cos(i * Math.PI / 4), r * Math.sin(i * Math.PI / 4)));
let v = `<path d="${minor}" stroke="#70757d" stroke-opacity=".18"/><path d="${major}" stroke="#6c6870" stroke-opacity=".45" stroke-width="1.400"/>`;
v += `<path d="M${F(G(0, 0))}L3606 1248.500" stroke="#a83c44" stroke-width="1.400"/>`;
for (let k = 0; k < 8; k++) v += `<path d="M${oct(G, 40 - 4.33 * k).map(F).join('L')}Z" fill="none" stroke="#a8323c" stroke-width="1.300"/>`;
let pl = ''; for (let i = -4; i <= 4; i++) pl += `M${F(G(i, -4))}L${F(G(i, 4))}M${F(G(-4, i))}L${F(G(4, i))}`;
v += `<path d="${pl}" stroke="#b42834" stroke-width="1.300"/><path d="M${F(G(0, 0))}L${F(G(0, y1))}" stroke="#3c9c3c" stroke-width="1.500"/><path d="M${F(G(0, 0))}L${F(G(0, 4))}" stroke="#145c14" stroke-width="1.600"/>`;
const Z = ([x, y]) => [2940 + x / 2.7034, 880 + y / 3];
const T = homog(axisPts, [[1484, 958], [949, 87], [93, 513], [604, 1420]].map(Z));
const Bt = homog(axisPts, [[1473, 1002], [935, 138], [86, 562], [594, 1466]].map(Z));
const shade = ['#686868', '#686868', '#9a9896', '#b0adab', '#4e4d4c', '#686868', '#989796', '#a9a6a4'];
const inner = ['#545250', '#686868', '#9a9896', '#b0adab', '#4e4d4c', '#686868', '#989796', '#a9a6a4'];
for (let k = 0; k < 4; k++) {
  const ro = 40 - 8.66 * k, ri = ro - 4.33, to = oct(T, ro), bo = oct(Bt, ro), ti = oct(T, ri), bi = oct(Bt, ri);
  const wall = (a, b, i, sign) => { const j = (i + 1) % 8, q = [a[i], a[j], b[j], b[i]]; let s = 0; q.forEach((p, n) => { const m = q[(n + 1) % 4]; s += p[0] * m[1] - m[0] * p[1]; }); return s * sign > 0 ? `<path d="M${q.map(F).join('L')}Z" fill="${(sign > 0 ? shade : inner)[i]}"/>` : ''; };
  v += '<g stroke="#141414" stroke-width="1.500" stroke-linejoin="round">';
  for (let i = 0; i < 8; i++) v += wall(to, bo, i, 1) + wall(ti, bi, i, -1);
  v += `<path fill-rule="evenodd" fill="#bbbbbd" d="M${to.map(F).join('L')}ZM${ti.map(F).join('L')}Z"/></g>`;
}
$('view').innerHTML = v;

// tune tracking so each label takes its intended width
function fit() {
  document.querySelectorAll('[data-w]').forEach(e => {
    e.style.display = 'inline-block'; e.style.whiteSpace = 'nowrap'; e.style.flexShrink = 0; e.style.letterSpacing = '0px';
    const n = e.offsetWidth;
    if (n) e.style.letterSpacing = ((+e.dataset.w - n) / e.textContent.length).toFixed(3) + 'px';
  });
}
fit();
window.addEventListener('load', fit);
document.fonts.ready.then(fit);
new ResizeObserver(fit).observe($('canvas'));
</script>
</body>
</html>
